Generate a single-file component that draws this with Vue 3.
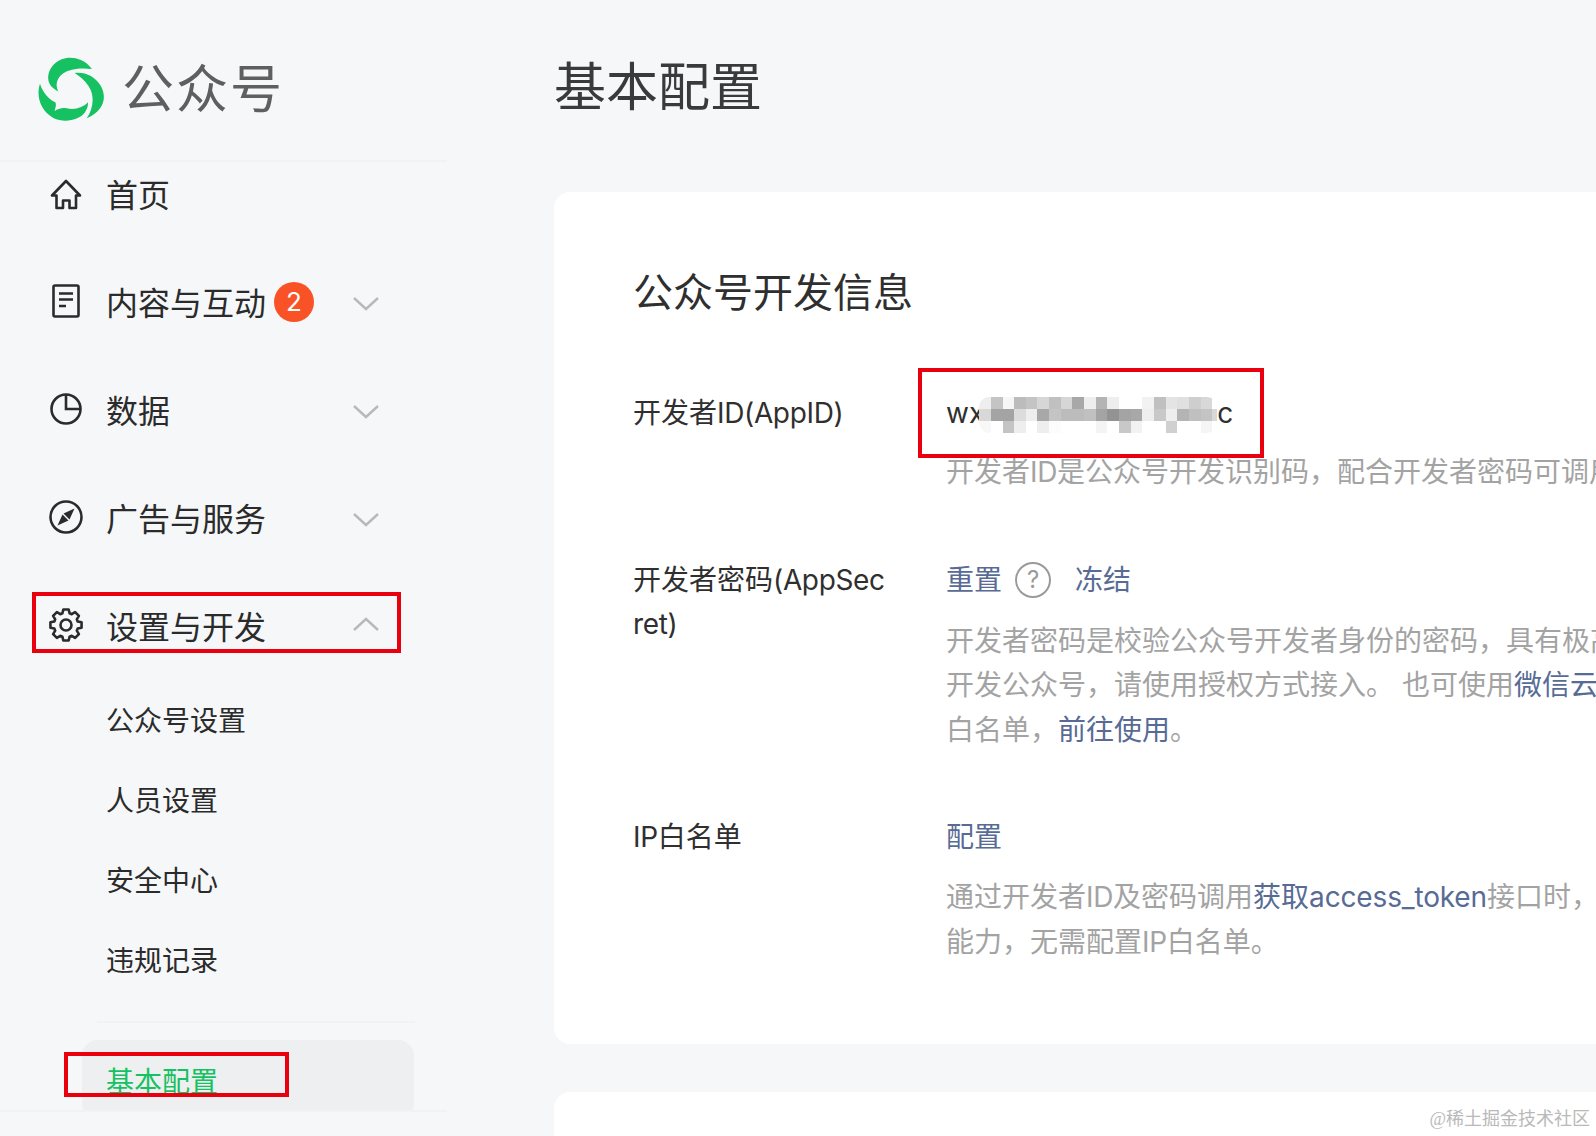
<template>
  <div class="page">
    <aside class="sidebar">
      <div class="brand">
        <svg class="logo" viewBox="24 24 204 192">
          <path fill="#15c160" d="M186 60C165 32 135 24 110 27 75 32 52 62 55 92 57 108 70 120 85 127 75 108 80 88 98 74 120 58 155 56 186 60Z" />
          <path fill="#15c160" d="M134 72C165 68 195 82 212 110 232 145 222 185 170 208 190 180 195 140 176 112 165 95 150 82 134 72Z" />
          <path fill="#15c160" d="M30 104C18 140 30 185 70 207 105 224 150 212 165 190 170 182 175 172 174 160 160 175 135 184 110 178 100 176 90 176 74 186 76 176 80 168 76 160 55 150 38 130 30 104Z" />
        </svg>
        <span class="brand-name">公众号</span>
      </div>
      <nav class="nav">
        <div class="nav-list">
          <div v-for="item in menu" :key="item.label" class="menu-row">
            <svg class="menu-icon" viewBox="0 0 34 34" fill="none" stroke="#2b2b2b" stroke-width="2.600">
              <path v-if="item.icon === 'home'" stroke-linejoin="round" d="M17 5 3 19.500H7.500V32H14V24.500H20.500V32H27V19.500H31z" />
              <template v-else-if="item.icon === 'doc'">
                <rect x="4.500" y="1.500" width="25" height="31" rx="1.500" />
                <path d="M10 9.500h14M10 15.500h14M10 22h7" />
              </template>
              <template v-else-if="item.icon === 'pie'">
                <circle cx="17" cy="17" r="14.500" />
                <path d="M17 2.500V17H31.500" />
              </template>
              <template v-else-if="item.icon === 'compass'">
                <circle cx="17" cy="17" r="15.500" />
                <path fill="#2b2b2b" stroke="none" d="M25.500 8.500 14.500 13.500 20.500 19.500z" />
                <path fill="#2b2b2b" stroke="none" d="M8.500 25.500 13.500 14.500 19.500 20.500z" />
              </template>
              <template v-else>
                <circle cx="17" cy="17" r="5.500" />
                <path stroke-linejoin="round" :d="gearPath" />
              </template>
            </svg>
            <span class="menu-label">{{ item.label }}</span>
            <span v-if="item.badge" class="badge">{{ item.badge }}</span>
            <svg v-if="item.arrow" class="chevron" :class="item.arrow" viewBox="0 0 26 14" fill="none" stroke="#b8b9bb" stroke-width="2.400">
              <path :d="item.arrow === 'up' ? 'M1 13 13 2l12 11' : 'M1 1l12 11L25 1'" />
            </svg>
          </div>
          <div v-for="sub in subMenu" :key="sub" class="sub-row">{{ sub }}</div>
          <div class="sub-divider"></div>
          <div class="sub-row active">基本配置</div>
        </div>
      </nav>
      <div class="side-foot"></div>
    </aside>

    <main class="main">
      <h1 class="page-title">基本配置</h1>
      <section class="card">
        <h2 class="card-title">公众号开发信息</h2>
        <div class="info-row first">
          <div class="info-label">开发者<span class="latin">ID(AppID)</span></div>
          <div class="info-value">
            <div class="app-id">
              <span>wx</span>
              <div class="mosaic">
                <i v-for="(c, i) in mosaic" :key="i" :style="{ background: c }"></i>
              </div>
              <span>c</span>
            </div>
            <p class="desc">开发者<span class="latin">ID</span>是公众号开发识别码，配合开发者密码可调用</p>
          </div>
        </div>
        <div class="info-row second">
          <div class="info-label">开发者密码<span class="latin">(AppSecret)</span></div>
          <div class="info-value">
            <div class="actions">
              <a>重置</a>
              <span class="help">?</span>
              <a class="freeze">冻结</a>
            </div>
            <p class="desc desc-top">开发者密码是校验公众号开发者身份的密码，具有极高</p>
            <p class="desc">开发公众号，请使用授权方式接入。 也可使用<a>微信云</a></p>
            <p class="desc">白名单，<a>前往使用</a>。</p>
          </div>
        </div>
        <div class="info-row third">
          <div class="info-label"><span class="latin">IP</span>白名单</div>
          <div class="info-value">
            <div class="actions"><a>配置</a></div>
            <p class="desc desc-top">通过开发者<span class="latin">ID</span>及密码调用<a>获取<span class="token">access_token</span></a>接口时，</p>
            <p class="desc">能力，无需配置<span class="latin">IP</span>白名单。</p>
          </div>
        </div>
      </section>
      <section class="card next"></section>
    </main>

    <!-- 截图上的标注 -->
    <div class="mark mark-id"></div>
    <div class="mark mark-menu"></div>
    <div class="mark mark-active"></div>
    <div class="watermark">@稀土掘金技术社区</div>
  </div>
</template>

<script setup>
const menu = [
  { label: '首页', icon: 'home' },
  { label: '内容与互动', icon: 'doc', badge: 2, arrow: 'down' },
  { label: '数据', icon: 'pie', arrow: 'down' },
  { label: '广告与服务', icon: 'compass', arrow: 'down' },
  { label: '设置与开发', icon: 'gear', arrow: 'up' }
]

const subMenu = ['公众号设置', '人员设置', '安全中心', '违规记录']

const mosaicRows = [
  'eee c4c4c4 f6f6f6 bcbcbc c4c4c4 d6d6d6 c0c0c0 d6d6d6 a8a8a8 eee b4b4b4 eee fff fff f2f2f2 c0c0c0 e4e4e4 e0e0e0 cecece d8d8d8 fff',
  'd8d8d8 a4a4a4 a4a4a4 dcdcdc eee a8a8a8 c4c4c4 bcbcbc bcbcbc c0c0c0 a4a4a4 939393 a4a4a4 a8a8a8 eee c8c8c8 eee b4b4b4 c0c0c0 c4c4c4 d8d8d8',
  'f8f8f8 fff c4c4c4 eee fff eee fcfcfc fff fff fff f4f4f4 fff c8c8c8 f2f2f2 fff fff d0d0d0 fff fff f5f5f5 fff'
]
const mosaic = mosaicRows.join(' ').split(' ').map((c) => '#' + c)

// 8 齿齿轮
const gearPath = (() => {
  const pts = []
  for (let i = 0; i < 8; i++) {
    const a = (i * Math.PI) / 4 - Math.PI / 2
    const rel = [[-0.3, 12.2], [-0.17, 15.8], [0.17, 15.8], [0.3, 12.2]]
    rel.forEach(([d, r]) => {
      pts.push((17 + r * Math.cos(a + d)).toFixed(2) + ' ' + (17 + r * Math.sin(a + d)).toFixed(2))
    })
  }
  return 'M' + pts.join('L') + 'Z'
})()
</script>

<style>
html,
body {
  margin: 0;
  background: #f6f7f9;
}
</style>

<style scoped>
.page {
  position: relative;
  display: flex;
  width: 1596px;
  height: 1136px;
  overflow: hidden;
  background: #f6f7f9;
  font-family: Inter, "Noto Sans CJK SC", sans-serif;
  color: #2b2b2b;
}

.sidebar {
  display: flex;
  flex-direction: column;
  flex: none;
  width: 447px;
  height: 1136px;
}

.brand {
  display: flex;
  flex: none;
  align-items: center;
  gap: 16px;
  height: 162px;
  box-sizing: border-box;
  padding: 18px 0 0 38px;
  border-bottom: 2px solid #f1f2f4;
}

.logo {
  width: 68px;
  height: 66px;
}

.brand-name {
  margin-top: -8px;
  font-size: 52px;
  color: #5f5f5f;
  letter-spacing: 2px;
}

.nav {
  flex: 1;
  min-height: 0;
  overflow: hidden;
}

.nav-list {
  margin-top: -23px;
}

.menu-row {
  display: flex;
  align-items: center;
  height: 108px;
  padding-left: 49px;
}

.menu-icon {
  flex: none;
  width: 34px;
  height: 34px;
  margin-right: 23px;
}

.menu-label {
  font-size: 32px;
}

.badge {
  width: 40px;
  height: 40px;
  margin: 2px 0 0 8px;
  border-radius: 50%;
  background: #fa5227;
  color: #fff;
  font-size: 26px;
  line-height: 40px;
  text-align: center;
}

.chevron {
  width: 26px;
  height: 14px;
  margin-left: auto;
  margin-right: 68px;
}

.chevron.down {
  margin-top: 5px;
}

.chevron.up {
  margin-top: -2px;
}

.sub-row {
  display: flex;
  align-items: center;
  height: 80px;
  padding-left: 106px;
  font-size: 28px;
}

.sub-divider {
  height: 2px;
  margin: 22px 32px 17px 97px;
  background: #f1f2f4;
}

.sub-row.active {
  margin: 0 33px 0 82px;
  padding-left: 24px;
  border-radius: 16px;
  background: #eeeff1;
  color: #15c160;
}

.side-foot {
  flex: none;
  height: 26px;
  border-top: 2px solid #f1f2f4;
  box-sizing: border-box;
  background: #f6f7f9;
}

.main {
  flex: 1;
  min-width: 0;
  padding-left: 107px;
}

.page-title {
  margin: 0;
  height: 192px;
  box-sizing: border-box;
  padding-top: 50px;
  font-size: 52px;
  line-height: 76px;
  font-weight: 400;
  color: #3a3a3a;
}

.card {
  width: 1400px;
  height: 852px;
  box-sizing: border-box;
  padding: 73px 0 0 79px;
  border-radius: 16px;
  background: #fff;
}

.card.next {
  height: 200px;
  margin-top: 48px;
  padding: 0;
}

.card-title {
  margin: 0;
  font-size: 40px;
  line-height: 56px;
  font-weight: 400;
  color: #2f2f2f;
}

.info-row {
  display: flex;
}

.info-row.first {
  margin-top: 70px;
}

.info-row.second {
  margin-top: 63px;
}

.info-row.third {
  margin-top: 63px;
}

.info-label {
  flex: none;
  width: 256px;
  margin-right: 57px;
  font-size: 28px;
  line-height: 44px;
  word-break: break-all;
  color: #2f2f2f;
}

.latin {
  letter-spacing: -0.35px;
}

.token {
  letter-spacing: -0.15px;
}

.info-value {
  flex: 1;
  min-width: 0;
  font-size: 28px;
  line-height: 44px;
}

.app-id {
  display: flex;
  align-items: center;
  height: 44px;
  color: #2f2f2f;
}

.mosaic {
  display: grid;
  grid-template-columns: repeat(20, 11.670px) 5px;
  grid-auto-rows: 12px;
  overflow: hidden;
  margin: 4px 0 0 -5px;
  border-radius: 10px;
  z-index: 1;
}

.mosaic i {
  display: block;
}

.actions {
  display: flex;
  align-items: center;
  height: 44px;
}

a {
  color: #576b95;
}

.help {
  display: flex;
  align-items: center;
  justify-content: center;
  width: 32px;
  height: 32px;
  margin-left: 13px;
  border: 2px solid #9a9a9a;
  border-radius: 50%;
  font-size: 24px;
  line-height: 1;
  color: #9a9a9a;
}

.freeze {
  margin-left: 24px;
}

.desc {
  margin: 0;
  white-space: nowrap;
  line-height: 44.500px;
  color: #a3a3a3;
}

.app-id + .desc {
  margin-top: 15px;
}

.desc-top {
  margin-top: 16px;
}

.second .desc-top {
  margin-top: 17px;
}

.mark {
  position: absolute;
  box-sizing: border-box;
  border: 4px solid #e8000f;
}

.mark-id {
  left: 918px;
  top: 368px;
  width: 346px;
  height: 90px;
}

.mark-menu {
  left: 32px;
  top: 592px;
  width: 369px;
  height: 61px;
}

.mark-active {
  left: 64px;
  top: 1052px;
  width: 225px;
  height: 45px;
}

.watermark {
  position: absolute;
  right: 6px;
  bottom: 6px;
  font-size: 18px;
  font-family: "Liberation Serif", "Noto Sans CJK SC", serif;
  color: #b9b9b9;
}
</style>
